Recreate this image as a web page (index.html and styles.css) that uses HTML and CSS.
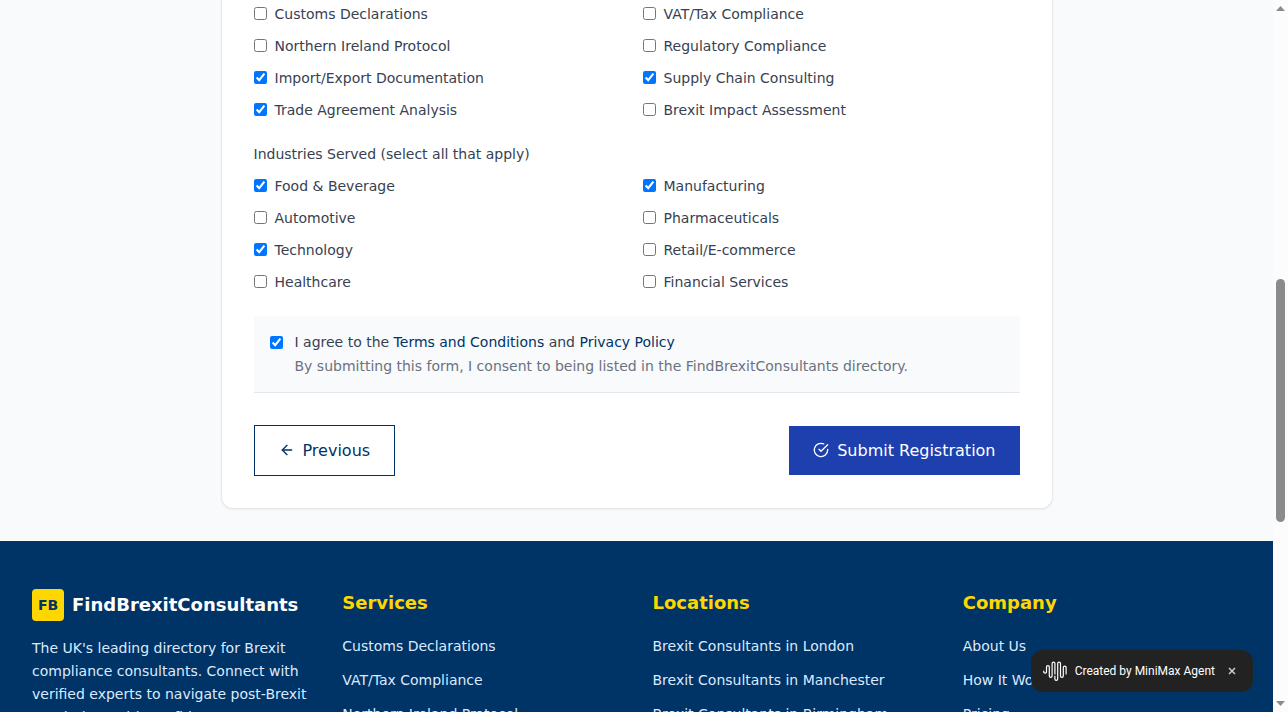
FILE: index.html
```html
<!DOCTYPE html>
<html lang="en">
<head>
<meta charset="utf-8">
<title>FindBrexitConsultants - Register</title>
<link rel="stylesheet" href="styles.css">
</head>
<body>
<div class="page">
  <main class="main">
    <form class="card">
      <fieldset class="group" aria-label="Services Offered">
        <div class="options">
          <label class="option"><input type="checkbox">Customs Declarations</label>
          <label class="option"><input type="checkbox">VAT/Tax Compliance</label>
          <label class="option"><input type="checkbox">Northern Ireland Protocol</label>
          <label class="option"><input type="checkbox">Regulatory Compliance</label>
          <label class="option"><input type="checkbox" checked>Import/Export Documentation</label>
          <label class="option"><input type="checkbox" checked>Supply Chain Consulting</label>
          <label class="option"><input type="checkbox" checked>Trade Agreement Analysis</label>
          <label class="option"><input type="checkbox">Brexit Impact Assessment</label>
        </div>
      </fieldset>
      <fieldset class="group">
        <legend class="legend">Industries Served (select all that apply)</legend>
        <div class="options">
          <label class="option"><input type="checkbox" checked>Food &amp; Beverage</label>
          <label class="option"><input type="checkbox" checked>Manufacturing</label>
          <label class="option"><input type="checkbox">Automotive</label>
          <label class="option"><input type="checkbox">Pharmaceuticals</label>
          <label class="option"><input type="checkbox" checked>Technology</label>
          <label class="option"><input type="checkbox">Retail/E-commerce</label>
          <label class="option"><input type="checkbox">Healthcare</label>
          <label class="option"><input type="checkbox">Financial Services</label>
        </div>
      </fieldset>
      <div class="consent">
        <input type="checkbox" id="agree" checked>
        <div class="consent-text">
          <label for="agree">I agree to the <a href="#terms">Terms and Conditions</a> and <a href="#privacy">Privacy Policy</a></label>
          <p class="consent-note">By submitting this form, I consent to being listed in the FindBrexitConsultants directory.</p>
        </div>
      </div>
      <div class="actions">
        <button type="button" class="btn btn-outline">
          <svg class="icon" viewBox="0 0 24 24" aria-hidden="true"><path d="m12 19-7-7 7-7"/><path d="M19 12H5"/></svg>
          Previous
        </button>
        <button type="submit" class="btn btn-primary">
          <svg class="icon" viewBox="0 0 24 24" aria-hidden="true"><path d="M22 11.08V12a10 10 0 1 1-5.93-9.14"/><path d="m9 11 3 3L22 4"/></svg>
          Submit Registration
        </button>
      </div>
    </form>
  </main>
  <footer class="footer">
    <div>
      <div class="brand"><span class="brand-mark">FB</span><span class="brand-name">FindBrexitConsultants</span></div>
      <p class="about">The UK's leading directory for Brexit compliance consultants. Connect with verified experts to navigate post-Brexit regulations with confidence.</p>
    </div>
    <nav>
      <h3 class="footer-title">Services</h3>
      <ul class="links">
        <li><a href="#customs">Customs Declarations</a></li>
        <li><a href="#vat">VAT/Tax Compliance</a></li>
        <li><a href="#ni">Northern Ireland Protocol</a></li>
      </ul>
    </nav>
    <nav>
      <h3 class="footer-title">Locations</h3>
      <ul class="links">
        <li><a href="#london">Brexit Consultants in London</a></li>
        <li><a href="#manchester">Brexit Consultants in Manchester</a></li>
        <li><a href="#birmingham">Brexit Consultants in Birmingham</a></li>
      </ul>
    </nav>
    <nav>
      <h3 class="footer-title">Company</h3>
      <ul class="links">
        <li><a href="#about">About Us</a></li>
        <li><a href="#how">How It Works</a></li>
        <li><a href="#pricing">Pricing</a></li>
      </ul>
    </nav>
  </footer>
  <div class="badge">
    <svg class="badge-logo" viewBox="0 0 24 22" aria-hidden="true"><path d="M.7 11v.8a1.400 1.400 0 0 0 2.800 0V7a1.400 1.400 0 0 1 2.800 0v9a1.400 1.400 0 0 0 2.800 0V3.500a1.400 1.400 0 0 1 2.800 0V14M11.900 16v3a1.400 1.400 0 0 0 2.800 0V3.500a1.400 1.400 0 0 1 2.800 0V16a1.400 1.400 0 0 0 2.800 0V7.500a1.400 1.400 0 0 1 2.800 0V14"/></svg>
    <span>Created by MiniMax Agent</span>
    <button type="button" class="badge-close" aria-label="Close"><svg viewBox="0 0 8 8" aria-hidden="true"><path d="M1 1l6 6M7 1L1 7"/></svg></button>
  </div>
</div>
<div class="scrollbar" aria-hidden="true">
  <svg class="arrow" viewBox="0 0 9 5"><path d="M0 5L4.500 0L9 5z"/></svg>
  <div class="track"><div class="thumb"></div></div>
  <svg class="arrow" viewBox="0 0 9 5"><path d="M0 0L4.500 5L9 0z"/></svg>
</div>
</body>
</html>
```
FILE: styles.css
```css
* { box-sizing: border-box; }

body {
  margin: 0;
  height: 100vh;
  display: flex;
  overflow: hidden;
  background: #f8fafc;
  color: #374151;
  font: 14px/20px "DejaVu Sans", sans-serif;
}

a { color: #003366; text-decoration: none; }
p, h3, ul { margin: 0; padding: 0; }
input[type="checkbox"] { width: 13px; height: 13px; margin: 3px 0 0; flex: none; }

.page {
  position: relative;
  flex: 1;
  min-width: 0;
  overflow: hidden;
}

.main {
  max-width: 896px;
  margin: 0 auto;
  padding: 0 32px 32px;
}

.card {
  padding: 4px 32px 32px;
  background: #fff;
  border: 1px solid #e5e7eb;
  border-top: 0;
  border-radius: 0 0 12px 12px;
  box-shadow: 0 1px 2px rgba(0, 0, 0, 0.05);
}

.group { margin: 0 0 24px; padding: 0; border: 0; min-width: 0; }
.legend { padding: 0; margin-bottom: 12px; }

.options {
  display: grid;
  grid-template-columns: 1fr 1fr;
  gap: 12px;
}

.option { display: flex; align-items: flex-start; gap: 8px; }

.consent {
  display: flex;
  gap: 12px;
  padding: 16px;
  background: #f8fafc;
}

.consent input[type="checkbox"] { margin-top: 4px; }
.consent-text { display: grid; gap: 4px; }
.consent-note { color: #6b7280; }

.actions {
  display: flex;
  justify-content: space-between;
  align-items: center;
  padding-top: 32px;
  border-top: 1px solid #e5e7eb;
}

.btn {
  display: flex;
  align-items: flex-start;
  gap: 8px;
  padding: 12px 24px;
  border: 0;
  font: 16px/25px "DejaVu Sans", sans-serif;
}

.btn-outline { background: #fff; color: #003366; border: 1px solid #003366; }
.btn-primary { background: #1e40af; color: #fff; }

.icon {
  width: 16px;
  height: 16px;
  margin-top: 4px;
  fill: none;
  stroke: currentColor;
  stroke-width: 2;
  stroke-linecap: round;
  stroke-linejoin: round;
}

.footer {
  display: grid;
  grid-template-columns: repeat(4, 1fr);
  gap: 32px;
  padding: 48px 32px;
  background: #003366;
  color: #dbeafe;
}

.brand { display: flex; align-items: center; gap: 8px; margin-bottom: 16px; }

.brand-mark {
  width: 32px;
  height: 32px;
  border-radius: 4px;
  background: #ffd700;
  color: #003366;
  font-weight: 700;
  line-height: 32px;
  text-align: center;
}

.brand-name { color: #fff; font-size: 18px; font-weight: 700; }
.about { line-height: 23px; }

.footer-title {
  margin-bottom: 16px;
  color: #ffd700;
  font-size: 18px;
  line-height: 28px;
}

.links { display: grid; gap: 8px; list-style: none; line-height: 26px; }
.links a { color: inherit; }

.badge {
  position: absolute;
  right: 20px;
  bottom: 20px;
  display: flex;
  align-items: center;
  gap: 8px;
  height: 42px;
  padding: 0 12px;
  border-radius: 12px;
  background: #222;
  color: #fff;
  font: 400 12px/20px Roboto, sans-serif;
}

.badge-logo { width: 24px; height: 22px; fill: none; stroke: #fff; stroke-width: 1.2; stroke-linecap: round; }

.badge-close {
  display: grid;
  place-items: center;
  width: 18px;
  height: 18px;
  padding: 0;
  border: 0;
  background: none;
}

.badge-close svg { width: 8px; height: 8px; stroke: #ccc; stroke-width: 1.5; }

.scrollbar {
  width: 15px;
  padding: 6px 3px;
  display: flex;
  flex-direction: column;
  background: #fcfcfc;
}

.arrow { width: 9px; height: 5px; fill: #8b8b8b; }
.track { flex: 1; padding-top: 268px; }
.thumb { height: 243px; border-radius: 5px; background: #8b8b8b; }
```
